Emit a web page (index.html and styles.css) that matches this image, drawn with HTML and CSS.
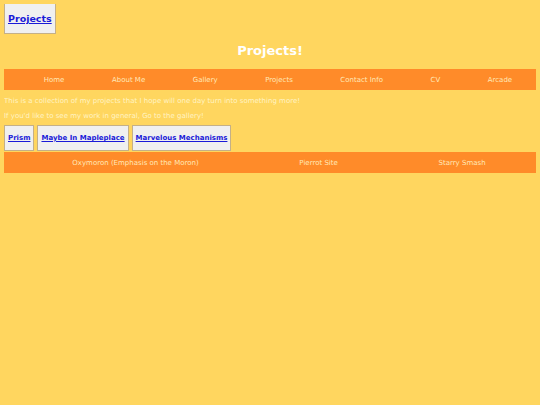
FILE: index.html
```html
<!DOCTYPE html>
<html lang="en">
<head>
    <meta charset="UTF-8">
    <meta name="viewport" content="width=device-width, initial-scale=1.0">
    <title>Projects</title>
    <link rel="stylesheet" href="styles.css">
</head>
<body>

    <!-- Page tab -->
    <div class="top">
        <a class="tab tab-big" href="#">Projects</a>
    </div>

    <!-- Title -->
    <h1 class="title">Projects!</h1>

    <!-- Main menu -->
    <ul class="menu">
        <li>Home</li>
        <li>About Me</li>
        <li>Gallery</li>
        <li>Projects</li>
        <li>Contact Info</li>
        <li>CV</li>
        <li>Arcade</li>
    </ul>

    <p class="intro">This is a collection of my projects that I hope will one day turn into something more!</p>
    <p class="intro">If you'd like to see my work in general, Go to the gallery!</p>

    <!-- Project tabs -->
    <div class="tabs">
        <a class="tab" href="#">Prism</a>
        <a class="tab" href="#">Maybe In Mapleplace</a>
        <a class="tab" href="#">Marvelous Mechanisms</a>
    </div>

    <ul class="menu submenu">
        <li>Oxymoron (Emphasis on the Moron)</li>
        <li>Pierrot Site</li>
        <li>Starry Smash</li>
    </ul>

</body>
</html>
```

FILE: styles.css
```css
body {
    margin: 4px;
    font-family: "DejaVu Sans", Verdana, sans-serif;
    background: #ffd65f; /* warm yellow */
    color: #fff0b8;
}

/* Tabs */
.top {
    display: flex;
    margin-top: -1px;
}

.tab {
    display: inline-block;
    background: #f0f0f0;
    border: 1px solid #c4b088;
    color: #1a1ad8;
    font-weight: bold;
    font-size: 7px;
    line-height: 10px;
    padding: 7px 3px;
}

.tab-big {
    font-size: 9.5px;
    line-height: 13px;
    padding: 8px 3px;
}

/* Title */
.title {
    margin: 8px 0 0;
    font-size: 13px;
    line-height: 18px;
    text-align: center;
    color: white;
}

/* Menu bars */
.menu {
    display: flex;
    justify-content: space-around;
    list-style: none;
    margin: 9px 0 0;
    padding: 0 0 0 16px;
    height: 21px;
    align-items: center;
    background: #ff8b29;
    color: #ffe9b8;
    font-size: 7px;
}

.intro {
    margin: 0;
    font-size: 7px;
    line-height: 15px;
    color: #fff3c4;
}

.menu + .intro {
    margin-top: 4px;
}

.tabs {
    display: flex;
    gap: 3px;
    margin-top: 1px;
}

.submenu {
    margin-top: 1px;
    padding-left: 18px;
}
```
